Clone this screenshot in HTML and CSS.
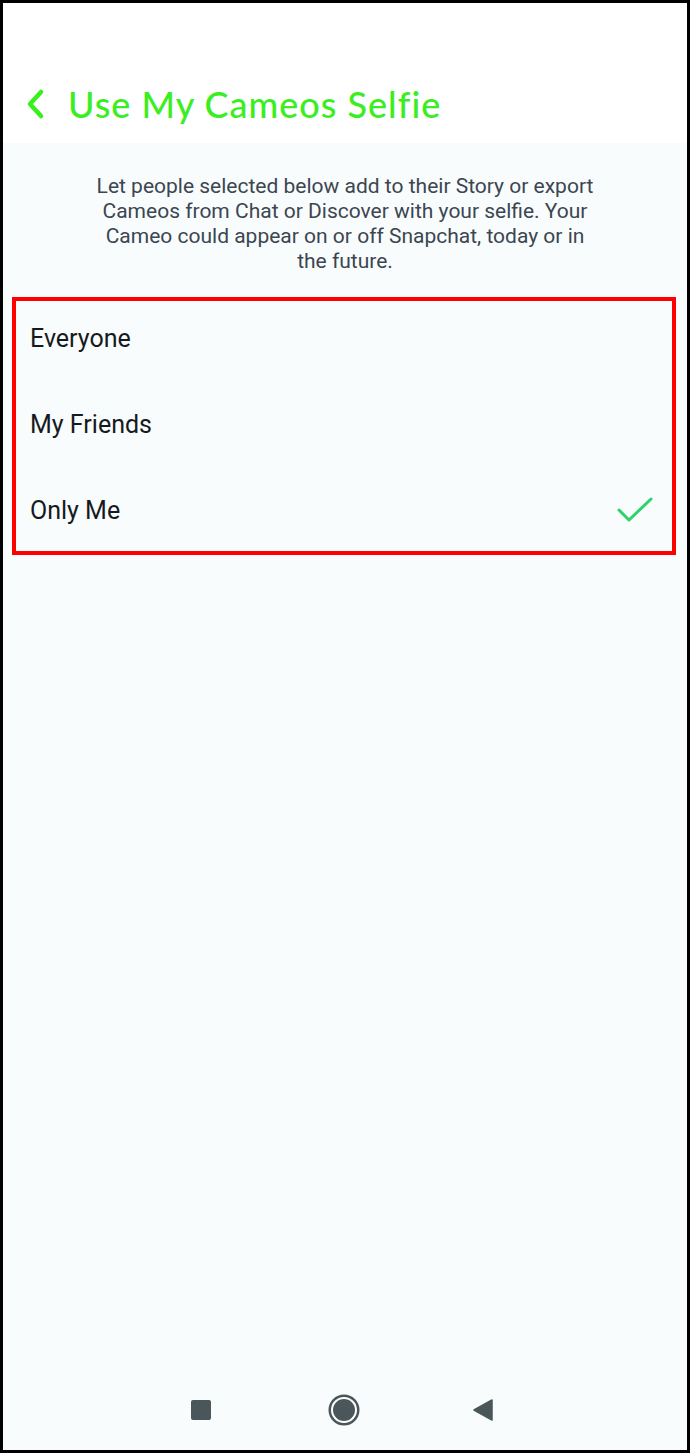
FILE: index.html
```html
<!DOCTYPE html>
<html lang="en">
<head>
  <meta charset="UTF-8" />
  <meta name="viewport" content="width=device-width, initial-scale=1.0"/>
  <title>Use My Cameos Selfie</title>
  <link rel="stylesheet" href="styles.css">
</head>
<body>
  <div class="screen">
    <header class="topbar">
      <a href="#" class="back" aria-label="Back">
        <svg width="22" height="32" viewBox="0 0 22 32">
          <path d="M16 4 L5 16 L16 28" fill="none" stroke="#3aee1f" stroke-width="4.5" stroke-linecap="round" stroke-linejoin="round"/>
        </svg>
      </a>
      <h1>Use My Cameos Selfie</h1>
    </header>

    <main class="content">
      <p class="intro">Let people selected below add to their Story or export<br>
        Cameos from Chat or Discover with your selfie. Your<br>
        Cameo could appear on or off Snapchat, today or in<br>
        the future.</p>

      <ul class="options">
        <li class="option">Everyone</li>
        <li class="option">My Friends</li>
        <li class="option selected">Only Me
          <svg class="check" width="38" height="28" viewBox="0 0 38 28">
            <path d="M3 14 L13 24 L35 3" fill="none" stroke="#2bd46a" stroke-width="3" stroke-linecap="round" stroke-linejoin="round"/>
          </svg>
        </li>
      </ul>
    </main>

    <nav class="navbar">
      <span class="nav-square"></span>
      <span class="nav-home"></span>
      <svg class="nav-back" width="22" height="24" viewBox="0 0 22 24">
        <path d="M20 2 L20 22 L2 12 Z" fill="#4a5659" stroke="#4a5659" stroke-width="1.5" stroke-linejoin="round"/>
      </svg>
    </nav>
  </div>
</body>
</html>
```

FILE: styles.css
```css
body {
  margin: 0;
  padding: 0;
  background: #000;
}
.screen {
  width: 690px;
  height: 1453px;
  box-sizing: border-box;
  border: 3px solid #000;
  background-color: #f9fcfd;
  display: flex;
  flex-direction: column;
}
.topbar {
  height: 140px;
  box-sizing: border-box;
  padding: 62px 0 0 22px;
  background-color: #fff;
  display: flex;
  align-items: center;
}
.back {
  display: flex;
  margin-right: 21px;
}
.topbar h1 {
  margin: 0;
  font-family: Lato, "Noto Sans", sans-serif;
  font-weight: 500;
  font-size: 36px;
  letter-spacing: 1px;
  color: #3aee1f;
}
.content {
  flex: 1;
}
.intro {
  margin: 31px 0 23px;
  font-family: Roboto, "Liberation Sans", sans-serif;
  font-size: 21px;
  line-height: 25px;
  color: #3b4651;
  text-align: center;
}
.options {
  list-style: none;
  margin: 0 11px 0 9px;
  padding: 0 0 4px;
  border: 4px solid #ff0000;
  display: flex;
  flex-direction: column;
  gap: 12px;
}
.option {
  height: 74px;
  padding: 0 18px 0 14px;
  display: flex;
  align-items: center;
  justify-content: space-between;
  font-family: Roboto, "Liberation Sans", sans-serif;
  font-size: 25px;
  color: #161a1e;
}
.navbar {
  height: 80px;
  display: flex;
  align-items: center;
  justify-content: center;
}
.nav-square {
  width: 20px;
  height: 20px;
  border-radius: 2px;
  background-color: #4a5659;
  margin: 0 120px 0 -6px;
}
.nav-home {
  width: 22px;
  height: 22px;
  border-radius: 50%;
  background-color: #4a5659;
  border: 2px solid #fff;
  box-shadow: 0 0 0 2.5px #4a5659;
  margin-right: 115px;
}
```
